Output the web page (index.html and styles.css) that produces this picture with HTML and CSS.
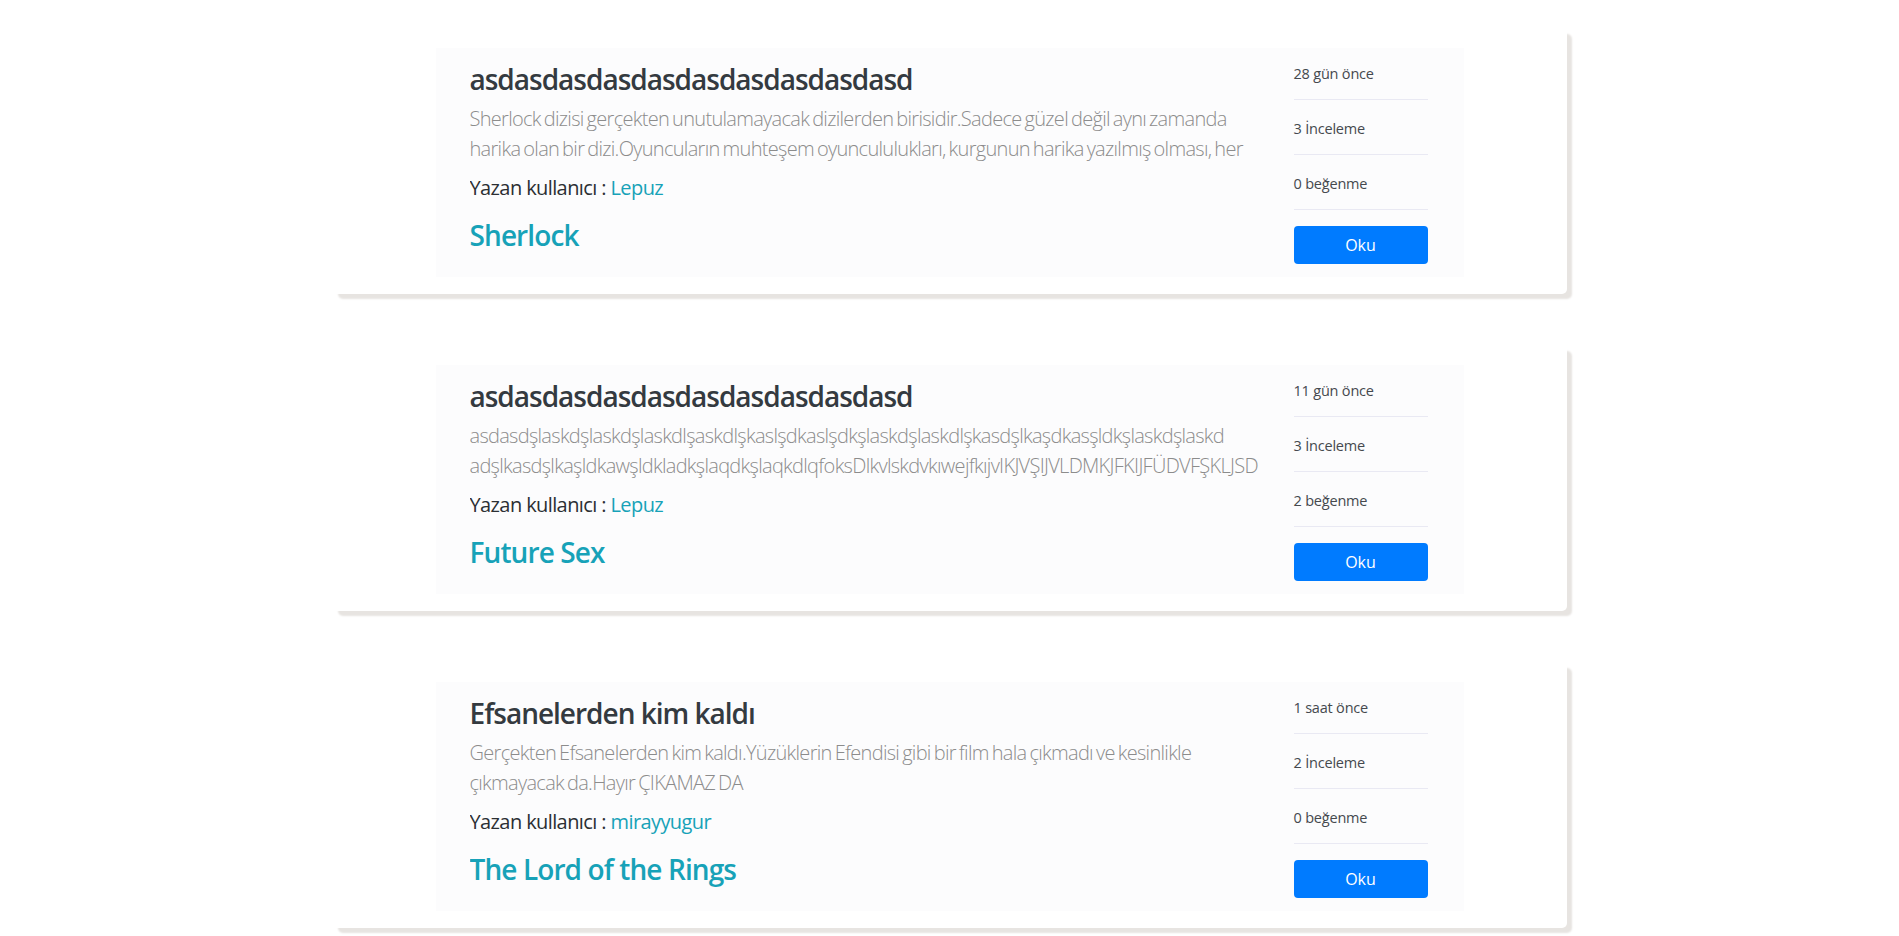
FILE: index.html
```html
<!DOCTYPE html>
<html lang="tr">
<head>
<meta charset="utf-8">
<title>İncelemeler</title>
<link rel="stylesheet" href="styles.css">
</head>
<body>
<main class="feed">
  <article class="card">
    <div class="panel">
      <div class="main-col">
        <h3 class="post-title">asdasdasdasdasdasdasdasdasdasd</h3>
        <p class="post-desc">Sherlock dizisi gerçekten unutulamayacak dizilerden birisidir.Sadece güzel değil aynı zamanda harika olan bir dizi.Oyuncuların muhteşem oyuncululukları, kurgunun harika yazılmış olması, her</p>
        <p class="post-author">Yazan kullanıcı : <a class="user-link" href="#">Lepuz</a></p>
        <h3 class="post-subject">Sherlock</h3>
      </div>
      <aside class="side-col">
        <div class="meta-item first">28 gün önce</div>
        <div class="meta-item">3 İnceleme</div>
        <div class="meta-item">0 beğenme</div>
        <a class="read-btn" href="#">Oku</a>
      </aside>
    </div>
  </article>

  <article class="card">
    <div class="panel">
      <div class="main-col">
        <h3 class="post-title">asdasdasdasdasdasdasdasdasdasd</h3>
        <p class="post-desc">asdasdşlaskdşlaskdşlaskdlşaskdlşkaslşdkaslşdkşlaskdşlaskdlşkasdşlkaşdkasşldkşlaskdşlaskd adşlkasdşlkaşldkawşldkladkşlaqdkşlaqkdlqfoksDlkvlskdvkıwejfkıjvIKJVŞIJVLDMKJFKIJFÜDVFŞKLJSD</p>
        <p class="post-author">Yazan kullanıcı : <a class="user-link" href="#">Lepuz</a></p>
        <h3 class="post-subject">Future Sex</h3>
      </div>
      <aside class="side-col">
        <div class="meta-item first">11 gün önce</div>
        <div class="meta-item">3 İnceleme</div>
        <div class="meta-item">2 beğenme</div>
        <a class="read-btn" href="#">Oku</a>
      </aside>
    </div>
  </article>

  <article class="card">
    <div class="panel">
      <div class="main-col">
        <h3 class="post-title">Efsanelerden kim kaldı</h3>
        <p class="post-desc">Gerçekten Efsanelerden kim kaldı.Yüzüklerin Efendisi gibi bir film hala çıkmadı ve kesinlikle çıkmayacak da.Hayır ÇIKAMAZ DA</p>
        <p class="post-author">Yazan kullanıcı : <a class="user-link" href="#">mirayyugur</a></p>
        <h3 class="post-subject">The Lord of the Rings</h3>
      </div>
      <aside class="side-col">
        <div class="meta-item first">1 saat önce</div>
        <div class="meta-item">2 İnceleme</div>
        <div class="meta-item">0 beğenme</div>
        <a class="read-btn" href="#">Oku</a>
      </aside>
    </div>
  </article>
</main>
</body>
</html>
```

FILE: styles.css
```css
* {
  box-sizing: border-box;
}

html, body {
  margin: 0;
  padding: 0;
  background: #ffffff;
}

body {
  font-family: "Open Sans", "Noto Sans", "DejaVu Sans", sans-serif;
  color: #212529;
  overflow: hidden;
}

.feed {
  padding-top: 29px;
}

.card {
  width: 1234px;
  margin: 0 auto 52px;
  padding: 19px 0 17px;
  background: #ffffff;
  border-radius: 5px;
  box-shadow: 5px 5px 2px #e7e4e1;
}

.panel {
  width: 1028px;
  margin: 0 auto;
  display: flex;
  gap: 30px;
  padding: 0 36px 13px 34px;
  background: #fcfcfd;
}

.main-col {
  flex: 1;
  min-width: 0;
  overflow: hidden;
  padding-top: 14px;
}

.post-title {
  margin: 0;
  font-size: 28px;
  line-height: 34px;
  font-weight: 600;
  color: #343a40;
  letter-spacing: -1px;
  white-space: nowrap;
}

.post-desc {
  margin: 8px 0 0;
  font-size: 20px;
  line-height: 30px;
  font-weight: 300;
  color: #8c8c8c;
  height: 60px;
  overflow: hidden;
  letter-spacing: -0.7px;
  word-spacing: -1.5px;
}

.post-author {
  margin: 9px 0 0;
  font-size: 20px;
  line-height: 30px;
  color: #2b2f33;
  letter-spacing: -0.6px;
}

.user-link {
  color: #17a2b8;
  text-decoration: none;
}

.post-subject {
  margin: 15px 0 0;
  font-size: 28px;
  line-height: 34px;
  font-weight: 600;
  color: #17a2b8;
  letter-spacing: -0.9px;
}

.side-col {
  width: 134px;
  flex: none;
  display: flex;
  flex-direction: column;
}

.meta-item {
  height: 55px;
  display: flex;
  align-items: center;
  border-bottom: 1px solid #e9e9f3;
  font-size: 14.5px;
  color: #45494e;
  letter-spacing: -0.2px;
  padding-top: 2px;
}

.meta-item.first {
  height: 52px;
  padding-top: 0;
}

.read-btn {
  margin-top: 16px;
  height: 38px;
  display: flex;
  align-items: center;
  justify-content: center;
  background: #007bff;
  color: #ffffff;
  border-radius: 4px;
  font-size: 16px;
  font-weight: 500;
  text-decoration: none;
}
```
